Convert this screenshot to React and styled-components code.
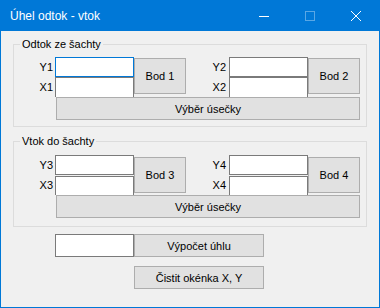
import React from 'react';
import styled, { createGlobalStyle } from 'styled-components';

const GlobalStyle = createGlobalStyle`
  body {
    margin: 0;
    font-family: "Liberation Sans", Arial, sans-serif;
    font-size: 11px;
    color: #000;
  }
`

const Window = styled.div`
  box-sizing: border-box;
  width: 380px;
  height: 308px;
  border: 1px solid #0078d7;
  background: #f0f0f0;
  display: flex;
  flex-direction: column;
`

const TitleBar = styled.div`
  height: 30px;
  flex-shrink: 0;
  display: flex;
  align-items: center;
  background: #0078d7;
  color: #fff;
  font-size: 12px;
  padding-left: 9px;
`

const Title = styled.div`
  flex: 1;
`

const CaptionButton = styled.div`
  width: 46px;
  height: 30px;
  display: flex;
  align-items: center;
  justify-content: center;
  padding-bottom: 1px;
  box-sizing: border-box;
  color: ${p => (p.$disabled ? 'rgba(255,255,255,0.35)' : '#fff')};
`

const Client = styled.div`
  flex: 1;
  padding: 0 12px;
  display: flex;
  flex-direction: column;
`

const Group = styled.fieldset`
  margin: ${p => p.$top}px 0 0;
  padding: 0;
  border: 1px solid #dcdcdc;
  min-width: 0;
`

const Legend = styled.legend`
  margin-left: 6px;
  padding: 0 2px;
  font-size: 11px;
  line-height: 13px;
`

const GroupBody = styled.div`
  padding: ${p => p.$padTop}px 0 ${p => p.$padBottom}px;
  display: flex;
  flex-direction: column;
`

const PointRow = styled.div`
  display: grid;
  grid-template-columns: 41px 79px 52px 43px 79px 52px;
  height: 40px;
`

const Stack = styled.div`
  display: flex;
  flex-direction: column;
`

const Label = styled.div`
  height: ${p => p.$h}px;
  margin-top: ${p => p.$gap || 0}px;
  line-height: ${p => p.$h}px;
  text-align: right;
  padding-right: ${p => p.$pad}px;
`

const Field = styled.input`
  box-sizing: border-box;
  display: block;
  width: ${p => p.$w || 79}px;
  height: ${p => p.$h}px;
  margin: ${p => p.$gap || 0}px 0 0;
  padding: 0 2px;
  background: #fff;
  border: 1px solid ${p => (p.$focused ? '#0078d7' : '#7a7a7a')};
  border-bottom-width: ${p => (p.$clipped ? 0 : 1)}px;
  font: inherit;
  outline: none;
`

const Button = styled.button`
  box-sizing: border-box;
  height: ${p => p.$h}px;
  margin-top: ${p => p.$top || 0}px;
  padding: 0;
  background: #e1e1e1;
  border: 1px solid #adadad;
  font: inherit;
  color: #000;
`

const SelectButton = styled(Button)`
  margin-left: 42px;
  width: 304px;
`

const Bottom = styled.div`
  margin: 7px 0 0 42px;
  display: grid;
  grid-template-columns: 79px 130px;
  row-gap: 9px;
`

const Icon = ({ kind }) => (
  <svg width="10" height="10" viewBox="0 0 10 10" fill="none" stroke="currentColor" strokeWidth="1">
    {kind === 'min' && <line x1="0" y1="5.5" x2="10" y2="5.5" />}
    {kind === 'max' && <rect x="0.5" y="0.5" width="9" height="9" />}
    {kind === 'close' && (
      <>
        <line x1="0" y1="0" x2="10" y2="10" />
        <line x1="10" y1="0" x2="0" y2="10" />
      </>
    )}
  </svg>
);

// One Y/X pair with its "Bod" button
const Pair = ({ n, labelPad, focused, gap, btnTop, xHeight }) => (
  <>
    <Stack>
      <Label $h={20} $pad={labelPad}>Y{n}</Label>
      <Label $h={xHeight} $gap={gap} $pad={labelPad}>X{n}</Label>
    </Stack>
    <Stack>
      <Field $h={20} $focused={focused} />
      <Field $h={xHeight} $gap={gap} $clipped />
    </Stack>
    <Button $h={36} $top={btnTop}>Bod {n}</Button>
  </>
);

const PointGroup = ({ title, first, top, padTop, padBottom, gap, btnTop, xHeight }) => (
  <Group $top={top}>
    <Legend>{title}</Legend>
    <GroupBody $padTop={padTop} $padBottom={padBottom}>
      <PointRow>
        <Pair n={first} labelPad={2} focused={first === 1} gap={gap} btnTop={btnTop} xHeight={xHeight} />
        <Pair n={first + 1} labelPad={3} gap={gap} btnTop={btnTop} xHeight={xHeight} />
      </PointRow>
      <SelectButton $h={23}>Výběr úsečky</SelectButton>
    </GroupBody>
  </Group>
);

const App = () => {
  return (
    <>
      <GlobalStyle />
      <Window>
        <TitleBar>
          <Title>Úhel odtok - vtok</Title>
          <CaptionButton><Icon kind="min" /></CaptionButton>
          <CaptionButton $disabled><Icon kind="max" /></CaptionButton>
          <CaptionButton><Icon kind="close" /></CaptionButton>
        </TitleBar>
        <Client>
          <PointGroup title="Odtok ze šachty" first={1} top={7} padTop={6} padBottom={6} gap={0} btnTop={1} xHeight={20} />
          <PointGroup title="Vtok do šachty" first={3} top={8} padTop={7} padBottom={8} gap={1} btnTop={2} xHeight={19} />
          <Bottom>
            <Field $h={23} />
            <Button $h={23}>Výpočet úhlu</Button>
            <span />
            <Button $h={23}>Čistit okénka X, Y</Button>
          </Bottom>
        </Client>
      </Window>
    </>
  );
};

export default App;
